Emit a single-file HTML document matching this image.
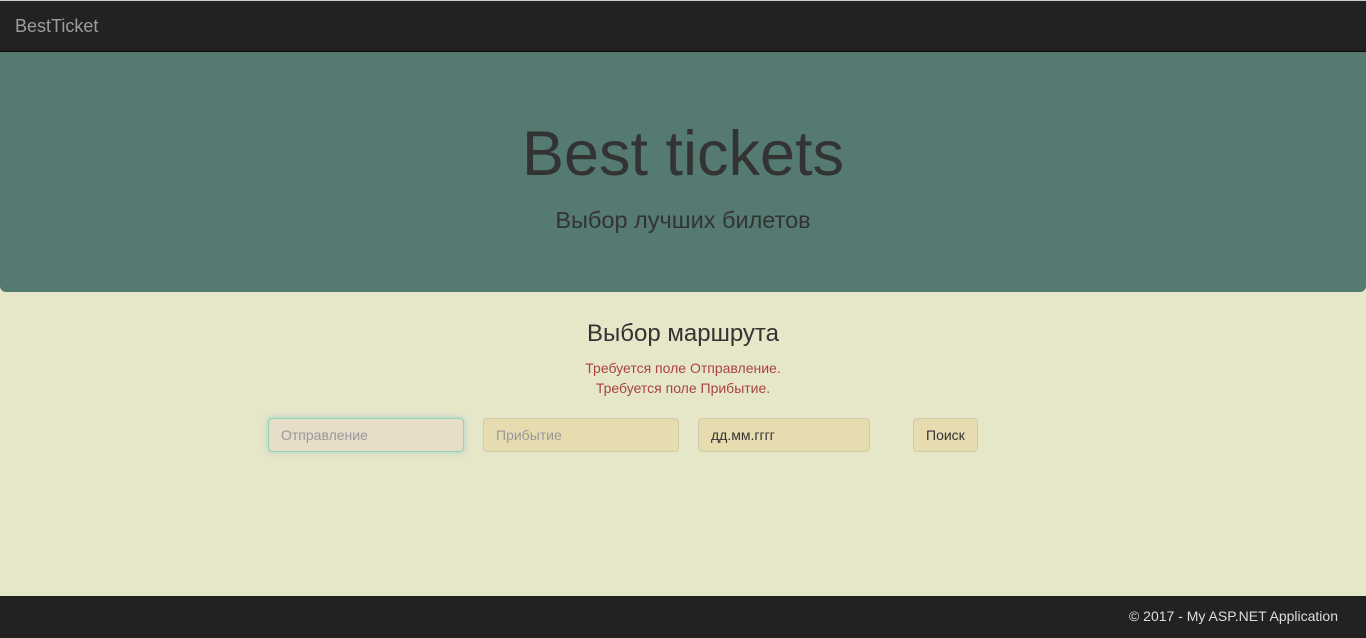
<!DOCTYPE html>
<html><head><meta charset="utf-8"><style>
*{box-sizing:border-box;margin:0;padding:0}
body{width:1366px;height:638px;background:#e6e6c8;font-family:"Liberation Sans",sans-serif;position:relative;overflow:hidden;color:#333}
.nav{position:absolute;top:0;left:0;width:1366px;height:52px;background:#222;border-top:1px solid #ccc;border-bottom:1px solid #080808}
.nav span{position:absolute;left:15px;top:15px;font-size:18px;color:#9d9d9d}
.jumbo{position:absolute;top:52px;left:0;width:1366px;height:240px;background:#557a72;border-radius:0 0 6px 6px;text-align:center}
.jumbo h1{font-size:63px;font-weight:normal;color:#333;margin-top:66px;line-height:72px}
.jumbo p{font-size:23.5px;margin-top:17px}
h3{position:absolute;top:320px;width:1366px;text-align:center;font-weight:normal;font-size:24px}
.err{position:absolute;width:1366px;text-align:center;font-size:14px;color:#a94442}
.in{position:absolute;top:418px;height:34px;border:1px solid #d0ccaa;border-radius:4px;background:#e6dcb0;font-size:14px;color:#999;padding:8px 12px}
.f{position:absolute;bottom:0;left:0;width:1366px;height:42px;background:#222;color:#ddd;font-size:14px}
.f span{position:absolute;right:28px;top:12px}
</style></head><body>
<div class="nav"><span>BestTicket</span></div>
<div class="jumbo"><h1>Best tickets</h1><p>Выбор лучших билетов</p></div>
<h3>Выбор маршрута</h3>
<div class="err" style="top:360px">Требуется поле Отправление.</div>
<div class="err" style="top:380px">Требуется поле Прибытие.</div>
<div class="in" style="left:268px;width:196px;background:#e6dcc8;border-color:#8fd8a8;box-shadow:0 0 6px rgba(102,175,233,.5)">Отправление</div>
<div class="in" style="left:483px;width:196px">Прибытие</div>
<div class="in" style="left:698px;width:172px;color:#333">дд.мм.гггг</div>
<div class="in" style="left:913px;width:65px;color:#333;padding:8px 12px">Поиск</div>
<div class="f"><span>© 2017 - My ASP.NET Application</span></div>
</body></html>
